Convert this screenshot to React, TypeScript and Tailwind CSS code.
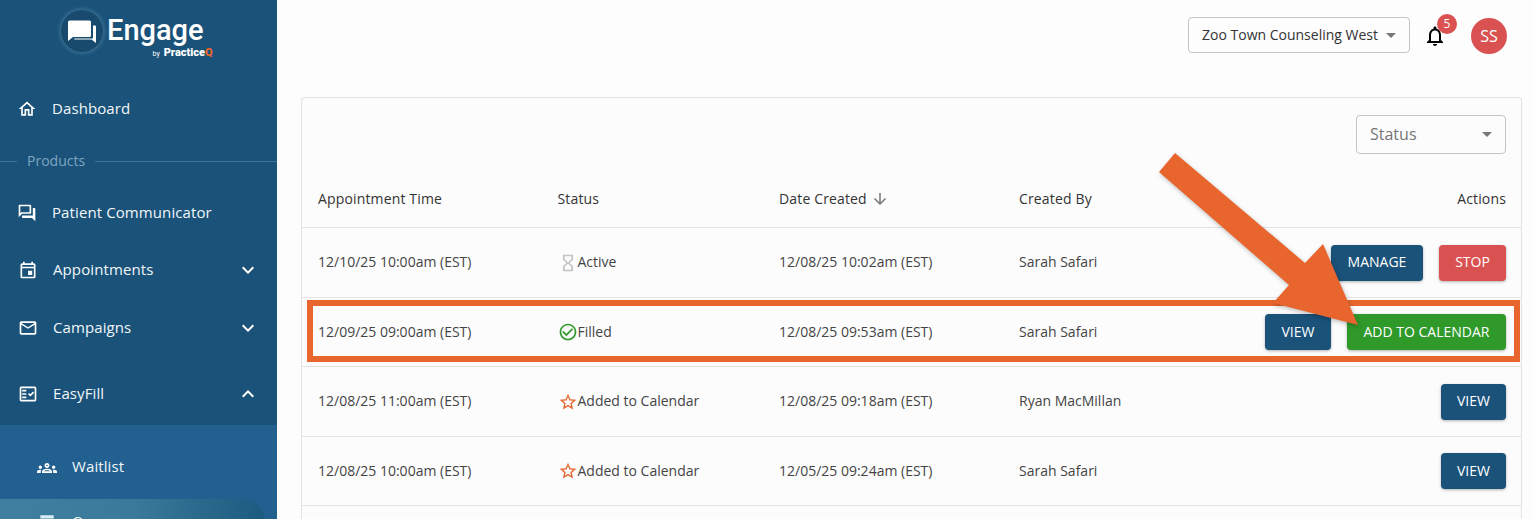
const ICONS: Record<string, string> = {
  home: "M12 5.69l5 4.5V18h-2v-6H9v6H7v-7.81l5-4.5M12 3L2 12h3v8h6v-6h2v6h6v-8h3L12 3z",
  forum: "M15 4v7H5.17l-.59.59-.58.58V4h11m1-2H3c-.55 0-1 .45-1 1v14l4-4h10c.55 0 1-.45 1-1V3c0-.55-.45-1-1-1zm5 4h-2v9H6v2c0 .55.45 1 1 1h11l4 4V7c0-.55-.45-1-1-1z",
  event: "M19 4h-1V2h-2v2H8V2H6v2H5c-1.11 0-1.99.9-1.99 2L3 20c0 1.1.89 2 2 2h14c1.1 0 2-.9 2-2V6c0-1.1-.9-2-2-2zm0 16H5V10h14v10zm0-12H5V6h14v2zm-7 5h5v5h-5z",
  mail: "M20 4H4c-1.1 0-1.99.9-1.99 2L2 18c0 1.1.9 2 2 2h16c1.1 0 2-.9 2-2V6c0-1.1-.9-2-2-2zm0 14H4V8l8 5 8-5v10zm-8-7L4 6h16l-8 5z",
  fact: "M20 3H4c-1.1 0-2 .9-2 2v14c0 1.1.9 2 2 2h16c1.1 0 2-.9 2-2V5c0-1.1-.9-2-2-2zm0 16H4V5h16v14zM19.41 10.42L17.99 9l-3.17 3.17-1.41-1.42L12 12.17 14.82 15zM5 7h5v2H5zM5 11h5v2H5zM5 15h5v2H5z",
  groups: "M4 13c1.1 0 2-.9 2-2 0-1.1-.9-2-2-2s-2 .9-2 2c0 1.1.9 2 2 2zm1.13 1.1c-.37-.06-.74-.1-1.13-.1-.99 0-1.93.21-2.78.58C.48 14.9 0 15.62 0 16.43V18h4.5v-1.61c0-.83.23-1.61.63-2.29zM20 13c1.1 0 2-.9 2-2 0-1.1-.9-2-2-2s-2 .9-2 2c0 1.1.9 2 2 2zm4 3.43c0-.81-.48-1.53-1.22-1.85-.85-.37-1.79-.58-2.78-.58-.39 0-.76.04-1.13.1.4.68.63 1.46.63 2.29V18H24v-1.57zm-7.76-2.78c-1.17-.52-2.61-.9-4.24-.9-1.63 0-3.07.39-4.24.9C6.68 14.13 6 15.21 6 16.39V18h12v-1.61c0-1.18-.68-2.26-1.76-2.74zM8.07 16c.09-.23.13-.39.91-.69.97-.38 1.99-.56 3.02-.56s2.05.18 3.02.56c.77.3.81.46.91.69H8.07zM12 8c.55 0 1 .45 1 1s-.45 1-1 1-1-.45-1-1 .45-1 1-1m0-2c-1.66 0-3 1.34-3 3s1.34 3 3 3 3-1.34 3-3-1.34-3-3-3z",
  bell: "M12 22c1.1 0 2-.9 2-2h-4c0 1.1.9 2 2 2zm6-6v-5c0-3.07-1.63-5.64-4.5-6.32V4c0-.83-.67-1.5-1.5-1.5s-1.5.67-1.5 1.5v.68C7.64 5.36 6 7.92 6 11v5l-2 2v1h16v-1l-2-2zm-2 1H8v-6c0-2.48 1.51-4.5 4-4.5s4 2.02 4 4.5v6z",
  star: "M22 9.24l-7.19-.62L12 2 9.19 8.63 2 9.24l5.46 4.73L5.82 21 12 17.27 18.18 21l-1.63-7.03L22 9.24zM12 15.4l-3.76 2.27 1-4.28-3.32-2.88 4.38-.38L12 6.1l1.71 4.04 4.38.38-3.32 2.88 1 4.28L12 15.4z",
  check: "M16.59 7.58L10 14.17l-3.59-3.58L5 12l5 5 8-8zM12 2C6.48 2 2 6.48 2 12s4.48 10 10 10 10-4.48 10-10S17.52 2 12 2zm0 18c-4.42 0-8-3.58-8-8s3.58-8 8-8 8 3.58 8 8-3.58 8-8 8z",
  hourglass: "M6 2v6h.01L6 8.01 10 12l-4 4 .01.01H6V22h12v-5.99h-.01L18 16l-4-4 4-3.99-.01-.01H18V2H6zm10 14.5V20H8v-3.5l4-4 4 4zm-4-5l-4-4V4h8v3.5l-4 4z",
  down: "M20 12l-1.41-1.41L13 16.17V4h-2v12.17l-5.58-5.59L4 12l8 8 8-8z",
  more: "M16.59 8.59L12 13.17 7.41 8.59 6 10l6 6 6-6z",
  less: "M12 8l-6 6 1.41 1.41L12 10.83l4.59 4.58L18 14z",
  list: "M4 5h16v4H4zM4 11h4v2H4zM10 11h10v2H10zM4 15h4v2H4zM10 15h10v2H10z",
};

function Icon({ name, className }: { name: string; className: string }) {
  return (
    <svg viewBox="0 0 24 24" className={className} fill="currentColor">
      <path d={ICONS[name]} />
    </svg>
  );
}

function NavItem({ icon, label, chevron, gap, pad }: { icon: string; label: string; chevron?: string; gap: string; pad: string }) {
  return (
    <div className={`flex h-[46px] items-center pr-[17px] ${pad}`}>
      <Icon name={icon} className="h-[20px] w-[20px] shrink-0 text-white" />
      <span className={`flex-1 pb-[1px] text-[15px] tracking-[0.1px] text-[#f2f7fa] ${gap}`}>{label}</span>
      {chevron && <Icon name={chevron} className="h-[24px] w-[24px] text-white" />}
    </div>
  );
}

function Button({ label, color, w }: { label: string; color: string; w: string }) {
  return (
    <div className={`flex h-[36px] items-center justify-center rounded-[4px] pb-[2px] text-[14px] text-white shadow-[0_1px_3px_rgba(0,0,0,0.3)] ${color} ${w}`}>
      {label}
    </div>
  );
}

const STATUS: Record<string, { icon: string; color: string; label: string }> = {
  active: { icon: "hourglass", color: "text-[#c4c4c4]", label: "Active" },
  filled: { icon: "check", color: "text-[#2f9a2a]", label: "Filled" },
  added: { icon: "star", color: "text-[#e8652e]", label: "Added to Calendar" },
};

const ROWS = [
  { time: "12/10/25 10:00am (EST)", status: "active", created: "12/08/25 10:02am (EST)", by: "Sarah Safari", h: "h-[70px]", kind: "manage" },
  { time: "12/09/25 09:00am (EST)", status: "filled", created: "12/08/25 09:53am (EST)", by: "Sarah Safari", h: "h-[69px]", kind: "filled" },
  { time: "12/08/25 11:00am (EST)", status: "added", created: "12/08/25 09:18am (EST)", by: "Ryan MacMillan", h: "h-[70px]", kind: "view" },
  { time: "12/08/25 10:00am (EST)", status: "added", created: "12/05/25 09:24am (EST)", by: "Sarah Safari", h: "h-[69px]", kind: "view" },
];

export default function App() {
  return (
    <div className="relative flex h-[519px] w-[1533px] overflow-hidden bg-[#fdfdfd] text-[14px] text-[#333333] [font-family:'Open_Sans',sans-serif]">
      <aside className="flex w-[277px] shrink-0 flex-col bg-[#1a5279]">
        <div className="flex h-[62px] items-start pl-[61px] pt-[10px]">
          <div className="flex h-[42px] w-[42px] shrink-0 items-center justify-center rounded-full bg-[#184a6d] shadow-[0_0_4px_1px_rgba(120,170,200,0.45)]">
            <svg viewBox="0 0 28 23" className="h-[23px] w-[28px] text-white" fill="currentColor">
              <path d="M1.5.5h20A1.5 1.5 0 0 1 23 2v13.5a1.5 1.5 0 0 1-1.5 1.5H5l-5 4V2A1.5 1.5 0 0 1 1.5.5Z" />
              <path d="M25 5.5h2a1 1 0 0 1 1 1V23l-4.5-3.5H7a1 1 0 0 1-1-1v-0H25Z" />
            </svg>
          </div>
          <div className="ml-[4px] flex flex-col">
            <span className="mt-[2px] text-[29px] font-medium leading-[36px] text-white [font-family:Roboto,sans-serif]">Engage</span>
            <span className="-mr-[9px] -mt-[1px] flex items-baseline justify-end leading-[11px] [font-family:Roboto,sans-serif]">
              <span className="mr-[4px] text-[7px] text-white">by</span>
              <span className="text-[11px] font-black text-white">Practice</span>
              <span className="text-[11px] font-black text-[#e8652e]">Q</span>
            </span>
          </div>
        </div>
        <div className="h-[24px]" />
        <NavItem icon="home" label="Dashboard" pad="pl-[17px]" gap="ml-[15px]" />
        <div className="flex h-[58px] items-center">
          <div className="h-px w-[17px] bg-[#3d7398]" />
          <span className="px-[10px] pb-[1px] text-[14px] text-[#7ea5c0]">Products</span>
          <div className="h-px flex-1 bg-[#3d7398]" />
        </div>
        <NavItem icon="forum" label="Patient Communicator" pad="pl-[17px]" gap="ml-[15px]" />
        <div className="h-[11px]" />
        <NavItem icon="event" label="Appointments" chevron="more" pad="pl-[18px]" gap="ml-[15px]" />
        <div className="h-[12px]" />
        <NavItem icon="mail" label="Campaigns" chevron="more" pad="pl-[18px]" gap="ml-[15px]" />
        <div className="h-[20px]" />
        <NavItem icon="fact" label="EasyFill" chevron="less" pad="pl-[18px]" gap="ml-[15px]" />
        <div className="h-[8px]" />
        <div className="flex-1 overflow-hidden bg-[#21608f] pt-[20px]">
          <div className="flex h-[46px] items-center pl-[37px]">
            <Icon name="groups" className="h-[20px] w-[20px] text-white" />
            <span className="ml-[15px] pb-[3px] text-[15px] tracking-[0.1px] text-[#f2f7fa]">Waitlist</span>
          </div>
          <div className="mr-[12px] mt-[8px] flex h-[46px] items-start rounded-r-[24px] bg-gradient-to-r from-[#3f7f9f] via-[#3b7a9a] to-[#1c5a80] pl-[37px] pt-[12px]">
            <Icon name="list" className="h-[20px] w-[20px] text-[#d8ecf7]" />
            <span className="ml-[15px] text-[15px] leading-[20px] text-white">Queue</span>
          </div>
        </div>
      </aside>

      <main className="flex flex-1 flex-col pl-[24px] pr-[11px]">
        <header className="flex h-[97px] items-start justify-end pr-[15px] pt-[17px]">
          <div className="flex h-[36px] w-[222px] items-center rounded-[4px] border border-[#c4c4c4] pl-[13px] text-[14px]">
            <span className="flex-1 pb-[2px]">Zoo Town Counseling West</span>
            <span className="mr-[13px] h-0 w-0 border-x-[5px] border-t-[5px] border-x-transparent border-t-[#777777]" />
          </div>
          <div className="relative ml-[12px] mt-[3px] h-[30px] w-[26px]">
            <Icon name="bell" className="absolute left-[1px] top-[4px] h-[24px] w-[24px] text-black" />
            <span className="absolute left-[15px] -top-[6px] flex h-[20px] w-[20px] items-center justify-center rounded-full bg-[#d95150] text-[12px] text-white">5</span>
          </div>
          <div className="ml-[23px] mt-[1px] flex h-[36px] w-[36px] items-center justify-center rounded-full bg-[#d95150] text-[16px] text-white">SS</div>
        </header>

        <section className="flex flex-1 flex-col overflow-hidden rounded-t-[4px] border border-b-0 border-[#e3e3e3] bg-[#fcfcfd]">
          <div className="flex h-[76px] items-start justify-end pr-[15px] pt-[17px]">
            <div className="flex h-[39px] w-[150px] items-center rounded-[4px] border border-[#c4c4c4] pb-[2px] pl-[13px] text-[16px] text-[#757575]">
              <span className="flex-1">Status</span>
              <span className="mr-[13px] mt-[2px] h-0 w-0 border-x-[5px] border-t-[5px] border-x-transparent border-t-[#777777]" />
            </div>
          </div>
          <div className="flex h-[54px] items-center border-b border-[#e3e3e3] pb-[4px] pl-[16px] pr-[15px] tracking-[0.15px]">
            <span className="w-[239.5px]">Appointment Time</span>
            <span className="w-[221.5px]">Status</span>
            <span className="flex w-[240px] items-center">
              Date Created
              <Icon name="down" className="ml-[4px] h-[18px] w-[18px] text-[#777777]" />
            </span>
            <span className="flex-1">Created By</span>
            <span>Actions</span>
          </div>
          {ROWS.map((r) => {
            const s = STATUS[r.status];
            return (
              <div key={r.time} className={`flex shrink-0 items-center border-b border-[#e3e3e3] pl-[16px] pr-[15px] ${r.h}`}>
                <span className="w-[239.5px] pb-[2px] text-[#444444]">{r.time}</span>
                <span className="flex w-[221.5px] items-center text-[#444444]">
                  <Icon name={s.icon} className={`h-[20px] w-[20px] ${s.color}`} />
                  <span className="pb-[2px]">{s.label}</span>
                </span>
                <span className="w-[240px] pb-[2px] text-[#444444]">{r.created}</span>
                <span className="flex-1 pb-[2px] text-[#444444]">{r.by}</span>
                {r.kind === "manage" && (
                  <div className="flex gap-[16px]">
                    <Button label="MANAGE" color="bg-[#1a5279]" w="w-[92px]" />
                    <Button label="STOP" color="bg-[#d95150]" w="w-[67px]" />
                  </div>
                )}
                {r.kind === "filled" && (
                  <div className="flex gap-[16px]">
                    <Button label="VIEW" color="bg-[#1a5279]" w="w-[66px]" />
                    <Button label="ADD TO CALENDAR" color="bg-[#2f9a2a]" w="w-[159px]" />
                  </div>
                )}
                {r.kind === "view" && <Button label="VIEW" color="bg-[#1a5279]" w="w-[65px]" />}
              </div>
            );
          })}
        </section>
      </main>

      <div className="pointer-events-none absolute left-[307px] top-[300px] h-[62px] w-[1213px] border-[6px] border-[#e8652e]" />
      <svg className="pointer-events-none absolute left-0 top-0 drop-shadow-[1px_2px_2px_rgba(0,0,0,0.25)]" width="1533" height="519" viewBox="0 0 1533 519">
        <polygon points="1175,153 1305,263 1323,244 1358,325 1273,303 1289,285 1159,172" fill="#e8652e" />
      </svg>
    </div>
  );
}
